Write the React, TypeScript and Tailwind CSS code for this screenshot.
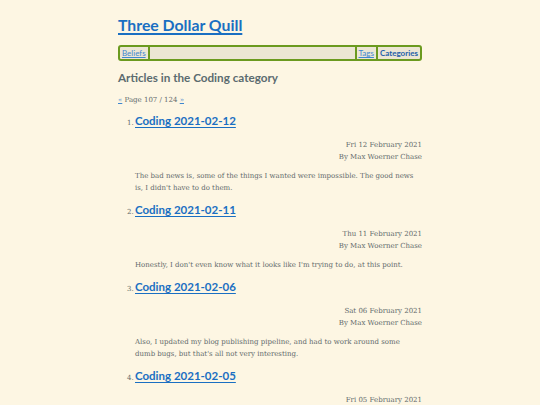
import React from "react";

const items = [
  {
    n: 1,
    title: "Coding 2021-02-12",
    date: "Fri 12 February 2021",
    text: "The bad news is, some of the things I wanted were impossible. The good news is, I didn't have to do them.",
  },
  {
    n: 2,
    title: "Coding 2021-02-11",
    date: "Thu 11 February 2021",
    text: "Honestly, I don't even know what it looks like I'm trying to do, at this point.",
  },
  {
    n: 3,
    title: "Coding 2021-02-06",
    date: "Sat 06 February 2021",
    text: "Also, I updated my blog publishing pipeline, and had to work around some dumb bugs, but that's all not very interesting.",
  },
  {
    n: 4,
    title: "Coding 2021-02-05",
    date: "Fri 05 February 2021",
    text: "",
  },
];

const sans = "font-['Lato','Open_Sans',sans-serif]";
const serif = "font-['DejaVu_Serif',serif]";

export default function App() {
  return (
    <div className="h-[405px] w-full overflow-hidden bg-[#fdf6e3] text-[#626a6b]">
      <div className="mx-auto w-[304px] pt-[13px]">
        <h1 className={`${sans} text-[15.8px] font-bold leading-[24px]`}>
          <a href="#" className="text-[#1a6fc2] underline decoration-2 underline-offset-2">
            Three Dollar Quill
          </a>
        </h1>
        <nav
          className={`${sans} mt-[8px] flex h-[16px] items-stretch rounded-[3px] border-2 border-[#6b9a1f] bg-[#ece6d4] text-[8px] leading-[12px]`}
        >
          <a href="#" className="border-r-2 border-[#6b9a1f] px-[2px] text-[#3f87cf] underline">
            Beliefs
          </a>
          <div className="flex-1" />
          <a href="#" className="border-l-2 border-[#6b9a1f] px-[2px] text-[#3f87cf] underline">
            Tags
          </a>
          <a href="#" className="border-l-2 border-[#6b9a1f] px-[2px] font-bold text-[#1f5fa8]">
            Categories
          </a>
        </nav>
        <h2 className={`${sans} mt-[7px] text-[11.7px] font-bold leading-[18px] text-[#5b6b6f]`}>
          Articles in the Coding category
        </h2>
        <div className={`${serif} mt-[9px] text-[7px] leading-[10px]`}>
          <a href="#" className="text-[#3f87cf] underline">«</a> Page 107 / 124{" "}
          <a href="#" className="text-[#3f87cf] underline">»</a>
        </div>
        <ol className="mt-[6px] pl-[17px]">
          {items.map((it) => (
            <li key={it.n} className="mb-[6px]">
              <div className="flex items-baseline">
                <span className={`${serif} -ml-[8px] w-[8px] text-[7px]`}>{it.n}.</span>
                <a
                  href="#"
                  className={`${sans} text-[11.5px] font-bold leading-[20px] text-[#1a6fc2] underline decoration-1 underline-offset-[1.5px]`}
                >
                  {it.title}
                </a>
              </div>
              <div className={`${serif} mt-[8px] text-right text-[7px] leading-[12px]`}>
                <div>{it.date}</div>
                <div>By Max Woerner Chase</div>
              </div>
              {it.text && (
                <p className={`${serif} mt-[7px] text-[7px] leading-[12px]`}>{it.text}</p>
              )}
            </li>
          ))}
        </ol>
      </div>
    </div>
  );
}
